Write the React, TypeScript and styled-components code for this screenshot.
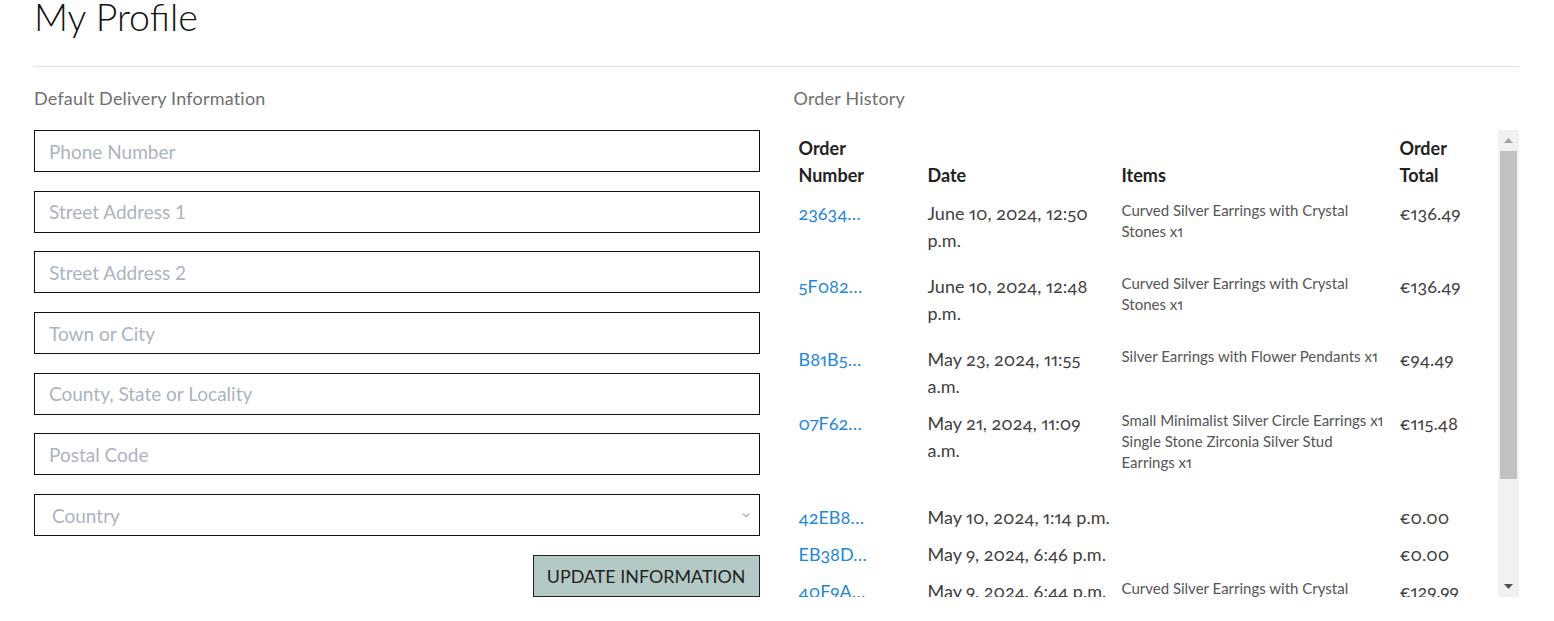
import React, { useCallback, useLayoutEffect, useRef, useState } from "react";
import styled, { createGlobalStyle } from "styled-components";

const GlobalStyle = createGlobalStyle`
  html, body { margin: 0; padding: 0; background: #fff; }
  body {
    font-family: "Lato", "Open Sans", sans-serif;
    font-variant-numeric: oldstyle-nums proportional-nums;
    color: #333;
    -webkit-font-smoothing: antialiased;
  }
  * { box-sizing: border-box; }
`;

const Page = styled.div`
  margin: 0 35px 0 34px;
`;

const Title = styled.h1`
  margin: 0;
  font-size: 37.5px;
  line-height: 34px;
  font-weight: 300;
  color: #111;
`;

const Rule = styled.hr`
  margin: 32px 0 0;
  border: 0;
  border-top: 1px solid #e3e3e3;
`;

const Columns = styled.div`
  display: grid;
  grid-template-columns: 1fr 1fr;
  column-gap: 34px;
`;

const Section = styled.section`
  display: flex;
  flex-direction: column;
  min-width: 0;
`;

const SectionTitle = styled.h2`
  margin: 18px 0 18px;
  font-size: 18px;
  line-height: 27px;
  font-weight: 400;
  letter-spacing: 0.2px;
  color: #707070;
`;

const Form = styled.form`
  display: flex;
  flex-direction: column;
  gap: 18.7px;
`;

const Field = styled.input`
  height: 42px;
  width: 100%;
  border: 1px solid #111;
  border-radius: 0;
  padding: 0 14px;
  font-family: inherit;
  font-size: 19px;
  color: #333;
  background: #fff;
  outline: none;
  &::placeholder { color: #abb4bf; }
`;

const SelectWrap = styled.div`
  position: relative;
`;

const Select = styled.select`
  appearance: none;
  height: 42px;
  width: 100%;
  border: 1px solid #111;
  border-radius: 0;
  padding: 0 17px;
  font-family: inherit;
  font-size: 19px;
  color: #abb4bf;
  background: #fff;
  outline: none;
`;

const Chevron = styled.svg`
  position: absolute;
  right: 9px;
  top: 17px;
  pointer-events: none;
`;

const Actions = styled.div`
  display: flex;
  justify-content: flex-end;
  margin-top: 0.3px;
`;

const SubmitButton = styled.button`
  height: 42px;
  padding: 0 13px;
  border: 1px solid #222;
  border-radius: 0;
  background: #b3c9c5;
  color: #222;
  font-family: inherit;
  font-size: 17.9px;
  font-weight: 400;
  cursor: pointer;
`;

const ScrollFrame = styled.div`
  display: flex;
  height: 467px;
`;

const ScrollArea = styled.div`
  flex: 1;
  min-width: 0;
  overflow-y: auto;
  scrollbar-width: none;
  &::-webkit-scrollbar { display: none; }
`;

const Track = styled.div`
  width: 21px;
  flex: none;
  display: flex;
  flex-direction: column;
  background: #f1f1f1;
`;

const ArrowButton = styled.button`
  height: 21px;
  flex: none;
  padding: 0;
  border: 0;
  background: #f1f1f1;
  display: flex;
  align-items: center;
  justify-content: center;
  cursor: default;
`;

const ThumbLane = styled.div`
  flex: 1;
  display: flex;
  flex-direction: column;
  padding: 0 2px;
`;

const Thumb = styled.div`
  flex: none;
  background: #c1c1c1;
`;

const Table = styled.table`
  width: 100%;
  table-layout: fixed;
  border-collapse: collapse;
  margin-bottom: 16px;
`;

const HeadCell = styled.th`
  padding: 5px 5px 6px;
  text-align: left;
  vertical-align: bottom;
  font-size: 18px;
  line-height: 27px;
  font-weight: 700;
  color: #222;
`;

const HeadLabel = styled.span`
  display: inline-block;
  width: min-content;
`;

const Cell = styled.td<{ $small?: boolean }>`
  padding: ${(p) => (p.$small ? "5px 7px 5px 5px" : "5px")};
  vertical-align: top;
  font-size: ${(p) => (p.$small ? "15px" : "18px")};
  line-height: ${(p) => (p.$small ? "21px" : "27px")};
  color: ${(p) => (p.$small ? "#555" : "#404040")};
`;

const OrderLink = styled.a`
  color: #1f87d9;
  text-decoration: none;
`;

const ItemList = styled.p`
  margin: 0 0 21px;
`;

const Item = styled.span`
  display: block;
`;

type Order = { id: string; date: string; items: string[]; total: string };

const CRYSTAL = "Curved Silver Earrings with Crystal Stones x1";

const orders: Order[] = [
  { id: "23634…", date: "June 10, 2024, 12:50 p.m.", items: [CRYSTAL], total: "€136.49" },
  { id: "5F082…", date: "June 10, 2024, 12:48 p.m.", items: [CRYSTAL], total: "€136.49" },
  { id: "B81B5…", date: "May 23, 2024, 11:55 a.m.", items: ["Silver Earrings with Flower Pendants x1"], total: "€94.49" },
  {
    id: "07F62…",
    date: "May 21, 2024, 11:09 a.m.",
    items: ["Small Minimalist Silver Circle Earrings x1", "Single Stone Zirconia Silver Stud Earrings x1"],
    total: "€115.48",
  },
  { id: "42EB8…", date: "May 10, 2024, 1:14 p.m.", items: [], total: "€0.00" },
  { id: "EB38D…", date: "May 9, 2024, 6:46 p.m.", items: [], total: "€0.00" },
  { id: "40F9A…", date: "May 9, 2024, 6:44 p.m.", items: [CRYSTAL], total: "€129.99" },
  { id: "9C2D7…", date: "May 8, 2024, 10:21 a.m.", items: [CRYSTAL], total: "€129.99" },
];

const fields = [
  "Phone Number",
  "Street Address 1",
  "Street Address 2",
  "Town or City",
  "County, State or Locality",
  "Postal Code",
];

function OrderTable() {
  const areaRef = useRef<HTMLDivElement>(null);
  const laneRef = useRef<HTMLDivElement>(null);
  const [thumb, setThumb] = useState({ size: 330, offset: 0 });

  const measure = useCallback(() => {
    const area = areaRef.current;
    const lane = laneRef.current;
    if (!area || !lane) return;
    const laneLen = lane.clientHeight;
    const ratio = Math.min(1, area.clientHeight / area.scrollHeight);
    const size = Math.max(20, laneLen * ratio);
    const maxScroll = area.scrollHeight - area.clientHeight;
    const offset = maxScroll > 0 ? (area.scrollTop / maxScroll) * (laneLen - size) : 0;
    setThumb({ size, offset });
  }, []);

  useLayoutEffect(() => {
    measure();
  }, [measure]);

  const scrollBy = (d: number) => {
    areaRef.current?.scrollBy({ top: d });
  };

  return (
    <ScrollFrame>
      <ScrollArea ref={areaRef} onScroll={measure}>
        <Table>
          <colgroup>
            <col style={{ width: 129 }} />
            <col style={{ width: 194 }} />
            <col style={{ width: 278 }} />
            <col />
          </colgroup>
          <thead>
            <tr>
              <HeadCell>
                <HeadLabel>Order Number</HeadLabel>
              </HeadCell>
              <HeadCell>Date</HeadCell>
              <HeadCell>Items</HeadCell>
              <HeadCell>
                <HeadLabel>Order Total</HeadLabel>
              </HeadCell>
            </tr>
          </thead>
          <tbody>
            {orders.map((o) => (
              <tr key={o.id}>
                <Cell>
                  <OrderLink href="#">{o.id}</OrderLink>
                </Cell>
                <Cell>{o.date}</Cell>
                <Cell $small>
                  {o.items.length > 0 && (
                    <ItemList>
                      {o.items.map((it, i) => (
                        <Item key={i}>{it}</Item>
                      ))}
                    </ItemList>
                  )}
                </Cell>
                <Cell>{o.total}</Cell>
              </tr>
            ))}
          </tbody>
        </Table>
      </ScrollArea>
      <Track>
        <ArrowButton type="button" aria-label="Scroll up" onClick={() => scrollBy(-40)}>
          <svg width="9" height="5" viewBox="0 0 9 5">
            <path d="M0 5 L4.5 0 L9 5 Z" fill="#a3a3a3" />
          </svg>
        </ArrowButton>
        <ThumbLane ref={laneRef}>
          <Thumb style={{ height: thumb.size, marginTop: thumb.offset }} />
        </ThumbLane>
        <ArrowButton type="button" aria-label="Scroll down" onClick={() => scrollBy(40)}>
          <svg width="9" height="5" viewBox="0 0 9 5">
            <path d="M0 0 L9 0 L4.5 5 Z" fill="#505050" />
          </svg>
        </ArrowButton>
      </Track>
    </ScrollFrame>
  );
}

export default function App() {
  return (
    <>
      <GlobalStyle />
      <Page>
        <Title>My Profile</Title>
        <Rule />
        <Columns>
          <Section>
            <SectionTitle>Default Delivery Information</SectionTitle>
            <Form onSubmit={(e) => e.preventDefault()}>
              {fields.map((f) => (
                <Field key={f} placeholder={f} />
              ))}
              <SelectWrap>
                <Select defaultValue="">
                  <option value="" disabled>
                    Country
                  </option>
                  <option value="IE">Ireland</option>
                </Select>
                <Chevron width="10" height="8" viewBox="0 0 10 8">
                  <path d="M1.5 2.5 L5 5.5 L8.5 2.5" fill="none" stroke="#b5b5b5" strokeWidth="1.4" />
                </Chevron>
              </SelectWrap>
              <Actions>
                <SubmitButton type="submit">UPDATE INFORMATION</SubmitButton>
              </Actions>
            </Form>
          </Section>
          <Section>
            <SectionTitle>Order History</SectionTitle>
            <OrderTable />
          </Section>
        </Columns>
      </Page>
    </>
  );
}
